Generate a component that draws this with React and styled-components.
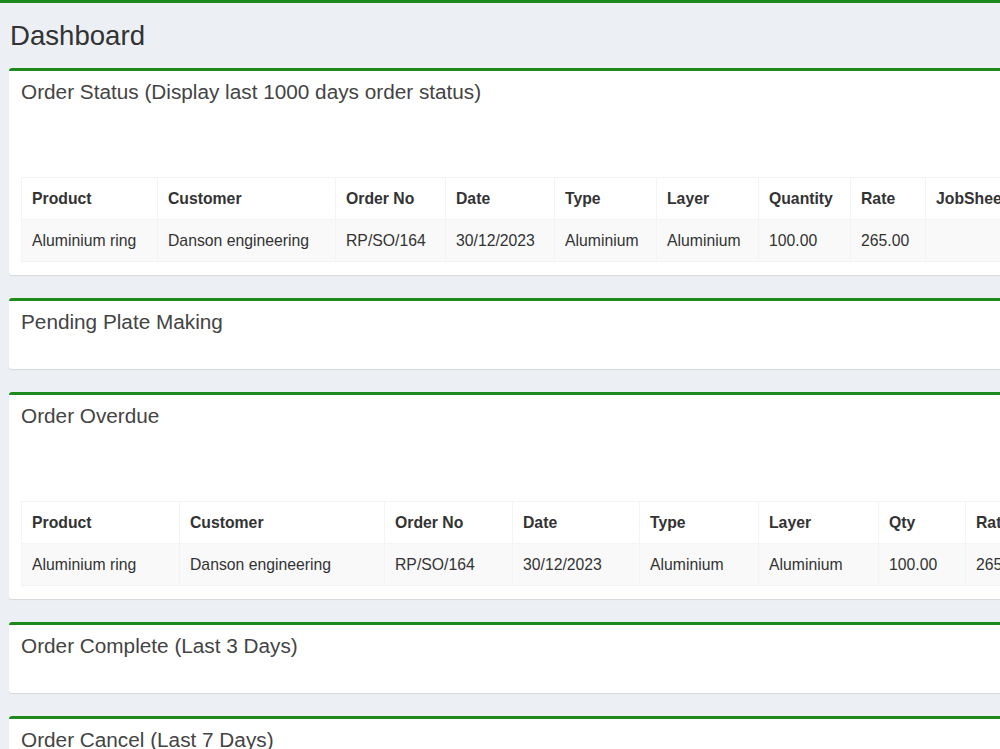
import React from 'react';
import styled, { createGlobalStyle } from 'styled-components';

const GlobalStyle = createGlobalStyle`
  html, body {
    margin: 0;
    padding: 0;
    overflow: hidden;
    background: #ecf0f5;
    font-family: "Liberation Sans", Arial, sans-serif;
    color: #333;
  }
`;

const Page = styled.div`
  border-top: 3px solid #1e8a1e;
  width: 1160px;
  min-height: 746px;
  background: #ecf0f5;
`;

const Content = styled.section`
  padding: 18px 0 0 9px;
`;

const Heading = styled.h1`
  margin: 0 0 17px 1px;
  font-size: 27.6px;
  font-weight: 400;
  line-height: 30px;
  color: #333;
`;

const Box = styled.div`
  background: #fff;
  border-top: 3px solid #1e8a1e;
  border-radius: 3px;
  box-shadow: 0 1px 1px rgba(0, 0, 0, 0.1);
  margin-bottom: 23px;
`;

const BoxHeader = styled.div`
  padding: 10px 12px;
`;

const BoxTitle = styled.h3`
  margin: 0;
  font-size: 20.75px;
  font-weight: 400;
  line-height: 22px;
  color: #444;
`;

const BoxBody = styled.div`
  padding: 13px 12px;
`;

const Spacer = styled.div`
  height: 51px;
`;

const Table = styled.table`
  border-collapse: collapse;
  table-layout: fixed;
  border: 1px solid #f4f4f4;
  font-size: 15.75px;
`;

const Col = styled.col`
  width: ${p => p.$w}px;
`;

const Th = styled.th`
  text-align: left;
  font-weight: 700;
  padding: 9px 10px;
  line-height: 23px;
  border: 1px solid #f4f4f4;
  white-space: nowrap;
  color: #333;
`;

const Row = styled.tr`
  background: ${p => (p.$odd ? '#f9f9f9' : '#fff')};
`;

const Td = styled.td`
  padding: 9px 10px;
  line-height: 23px;
  border: 1px solid #f4f4f4;
  white-space: nowrap;
  color: #333;
`;

const row = ['Aluminium ring', 'Danson engineering', 'RP/SO/164', '30/12/2023', 'Aluminium', 'Aluminium', '100.00', '265.00'];

const statusCols = [
  ['Product', 136], ['Customer', 178], ['Order No', 110], ['Date', 109], ['Type', 102],
  ['Layer', 102], ['Quantity', 92], ['Rate', 75], ['JobSheet', 110], ['Status', 90],
];
const statusRow = [...row, '', ''];

const overdueCols = [
  ['Product', 158], ['Customer', 205], ['Order No', 128], ['Date', 127], ['Type', 119],
  ['Layer', 120], ['Qty', 87], ['Rate', 90], ['Days', 80],
];
const overdueRow = [...row, ''];

const DataTable = ({ cols, rows }) => (
  <Table>
    <colgroup>
      {cols.map(([name, w]) => <Col key={name} $w={w} />)}
    </colgroup>
    <thead>
      <Row>
        {cols.map(([name]) => <Th key={name}>{name}</Th>)}
      </Row>
    </thead>
    <tbody>
      {rows.map((r, i) => (
        <Row key={i} $odd={i % 2 === 0}>
          {r.map((c, j) => <Td key={j}>{c}</Td>)}
        </Row>
      ))}
    </tbody>
  </Table>
);

const Panel = ({ title, children }) => (
  <Box>
    <BoxHeader>
      <BoxTitle>{title}</BoxTitle>
    </BoxHeader>
    <BoxBody>{children}</BoxBody>
  </Box>
);

export default function App() {
  return (
    <Page>
      <GlobalStyle />
      <Content>
        <Heading>Dashboard</Heading>
        <Panel title="Order Status (Display last 1000 days order status)">
          <Spacer />
          <DataTable cols={statusCols} rows={[statusRow]} />
        </Panel>
        <Panel title="Pending Plate Making" />
        <Panel title="Order Overdue">
          <Spacer />
          <DataTable cols={overdueCols} rows={[overdueRow]} />
        </Panel>
        <Panel title="Order Complete (Last 3 Days)" />
        <Panel title="Order Cancel (Last 7 Days)" />
      </Content>
    </Page>
  );
}
